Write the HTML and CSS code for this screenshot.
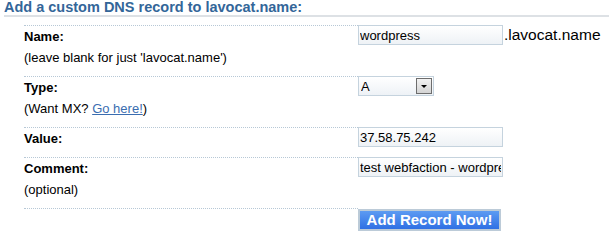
FILE: index.html
```html
<!DOCTYPE html>
<html lang="en">
<head>
    <meta charset="UTF-8">
    <title>Add DNS record</title>
    <link rel="stylesheet" href="styles.css">
</head>
<body>
    <h2 class="section-title">Add a custom DNS record to lavocat.name:</h2>

    <form class="dns-form" onsubmit="return false;">
        <table class="form-table">
            <tr>
                <td class="label-cell">
                    <span class="field-name">Name:</span>
                    <span class="field-note">(leave blank for just 'lavocat.name')</span>
                </td>
                <td class="input-cell">
                    <input type="text" class="text-input" value="wordpress"><span class="domain-suffix">.lavocat.name</span>
                </td>
            </tr>
            <tr>
                <td class="label-cell">
                    <span class="field-name">Type:</span>
                    <span class="field-note">(Want MX? <a href="#">Go here!</a>)</span>
                </td>
                <td class="input-cell">
                    <span class="select-wrap">
                        <select class="type-select">
                            <option>A</option>
                            <option>CNAME</option>
                            <option>TXT</option>
                        </select>
                        <span class="select-arrow"></span>
                    </span>
                </td>
            </tr>
            <tr>
                <td class="label-cell">
                    <span class="field-name">Value:</span>
                </td>
                <td class="input-cell">
                    <input type="text" class="text-input" value="37.58.75.242">
                </td>
            </tr>
            <tr>
                <td class="label-cell">
                    <span class="field-name">Comment:</span>
                    <span class="field-note">(optional)</span>
                </td>
                <td class="input-cell">
                    <input type="text" class="text-input" value="test webfaction - wordpress">
                </td>
            </tr>
            <tr>
                <td class="label-cell"></td>
                <td class="input-cell">
                    <button type="submit" class="add-btn">Add Record Now!</button>
                </td>
            </tr>
        </table>
    </form>
</body>
</html>
```

FILE: styles.css
```css
* {
    margin: 0;
    padding: 0;
    box-sizing: border-box;
}

body {
    font-family: 'Liberation Sans', Arial, sans-serif;
    font-size: 13px;
    color: #000;
    background: #fff;
}

.section-title {
    margin-left: 4px;
    font-size: 14.5px;
    line-height: 15px;
    font-weight: bold;
    color: #336699;
    border-bottom: 2px solid #dde1e5;
}

.dns-form {
    margin: 8px 0 0 24px;
}

.form-table {
    border-collapse: separate;
    border-spacing: 0;
}

.label-cell {
    width: 334px;
    vertical-align: top;
    border-top: 1px dotted #b7c8d6;
    line-height: 21px;
    padding-bottom: 8px;
}

.field-name {
    display: block;
    font-weight: bold;
}

.field-note {
    display: block;
}

.field-note a {
    color: #3a6db0;
}

.input-cell {
    vertical-align: top;
    white-space: nowrap;
}

.text-input {
    width: 145px;
    height: 20px;
    padding: 0 1px;
    border: 1px solid #c5d3de;
    background: linear-gradient(to bottom, #ffffff, #eef2f6);
    font-family: 'Liberation Sans', Arial, sans-serif;
    font-size: 13px;
    color: #000;
    outline: none;
    vertical-align: top;
}

.domain-suffix {
    font-size: 15.5px;
    line-height: 19px;
    vertical-align: top;
    margin-left: 1px;
}

.select-wrap {
    position: relative;
    display: inline-block;
    vertical-align: top;
}

.type-select {
    -webkit-appearance: none;
    appearance: none;
    width: 76px;
    height: 20px;
    padding: 0 2px;
    border: 1px solid #c5d3de;
    background: linear-gradient(to bottom, #ffffff, #eef2f6);
    font-family: 'Liberation Sans', Arial, sans-serif;
    font-size: 13px;
    color: #000;
    border-radius: 0;
    outline: none;
}

.select-arrow {
    position: absolute;
    top: 2px;
    right: 2px;
    width: 16px;
    height: 16px;
    border: 1px solid #6d6d6d;
    background: linear-gradient(to bottom, #f2f2f2, #d4d4d4);
    pointer-events: none;
}

.select-arrow::after {
    content: "";
    position: absolute;
    left: 4px;
    top: 6px;
    border-left: 3px solid transparent;
    border-right: 3px solid transparent;
    border-top: 3px solid #000;
}

.add-btn {
    width: 143px;
    height: 22px;
    margin-top: 1px;
    border: 2px solid #bccbd8;
    background: linear-gradient(to bottom, #5c9bf2, #2f70e4);
    color: #fff;
    font-family: 'Liberation Sans', Arial, sans-serif;
    font-size: 15px;
    font-weight: bold;
    line-height: 16px;
    cursor: pointer;
}
```
